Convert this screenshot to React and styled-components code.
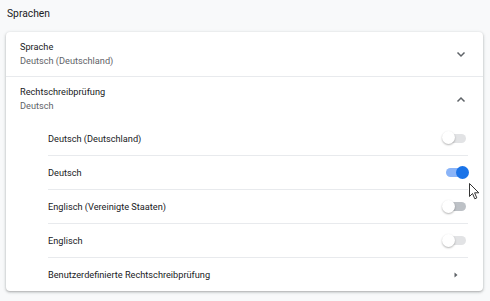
import React from "react";
import styled, { createGlobalStyle } from "styled-components";

const Global = createGlobalStyle`
  html, body { margin: 0; padding: 0; background: #f8f9fa; }
  body { font-family: Roboto, "Liberation Sans", sans-serif; color: #202124; -webkit-font-smoothing: antialiased; }
`;

const Page = styled.div`
  width: 490px;
  height: 301px;
  box-sizing: border-box;
  padding: 7px 7px 0 6px;
  position: relative;
  overflow: hidden;
`;

const Title = styled.div`
  font-size: 10.3px;
  line-height: 13px;
  color: #202124;
  padding-left: 1px;
  margin-bottom: 12px;
`;

const Card = styled.div`
  background: #fff;
  border-radius: 4px;
  box-shadow: 0 1px 2px rgba(60, 64, 67, 0.3), 0 1px 3px 1px rgba(60, 64, 67, 0.12);
`;

const Section = styled.div`
  display: flex;
  align-items: center;
  justify-content: space-between;
  padding: 0 16px 0 14px;
  height: ${(p) => p.$h}px;
  border-top: ${(p) => (p.$divider ? "1px solid #e8eaed" : "none")};
  box-sizing: border-box;
`;

const Labels = styled.div`
  display: flex;
  flex-direction: column;
  gap: 1px;
  margin-top: -2px;
`;

const Primary = styled.div`
  font-size: 9.2px;
  line-height: 13px;
  color: #202124;
`;

const Secondary = styled.div`
  font-size: 9.2px;
  line-height: 13px;
  color: #5f6368;
`;

const List = styled.div`
  padding: 0 15px 0 42px;
`;

const Row = styled.div`
  display: flex;
  align-items: center;
  justify-content: space-between;
  height: 34px;
  border-top: ${(p) => (p.$divider ? "1px solid #e8eaed" : "none")};
  box-sizing: border-box;
`;

const Track = styled.div`
  position: relative;
  width: 20px;
  height: 9px;
  border-radius: 5px;
  margin-right: 2px;
  background: ${(p) => (p.$on ? "#8ab4f8" : p.$hover ? "#bdc1c6" : "#e2e3e5")};
`;

const Knob = styled.div`
  position: absolute;
  top: -2.5px;
  left: ${(p) => (p.$on ? "10px" : "-4px")};
  width: 13px;
  height: 13px;
  border-radius: 50%;
  background: ${(p) => (p.$on ? "#1a73e8" : "#fff")};
  box-shadow: ${(p) => (p.$on ? "none" : "0 1px 2px rgba(0,0,0,0.3)")};
`;

const IconBox = styled.div`
  display: flex;
  align-items: center;
  justify-content: center;
  width: 12px;
  height: 12px;
  margin-right: ${(p) => p.$mr || 0}px;
  color: #5f6368;
`;

const Cursor = styled.svg`
  position: absolute;
  left: 469px;
  top: 183px;
`;

function Toggle({ on, hover }) {
  return (
    <Track $on={on} $hover={hover}>
      <Knob $on={on} />
    </Track>
  );
}

const Chevron = ({ up }) => (
  <IconBox>
    <svg width="10" height="7" viewBox="0 0 10 7">
      <path
        d={up ? "M1.5 5.5 L5 2 L8.5 5.5" : "M1.5 1.5 L5 5 L8.5 1.5"}
        fill="none"
        stroke="#5f6368"
        strokeWidth="1.5"
      />
    </svg>
  </IconBox>
);

const rows = [
  { label: "Deutsch (Deutschland)", on: false },
  { label: "Deutsch", on: true },
  { label: "Englisch (Vereinigte Staaten)", on: false, hover: true },
  { label: "Englisch", on: false },
];

export default function App() {
  return (
    <>
      <Global />
      <Page>
        <Title>Sprachen</Title>
        <Card>
          <Section $h={44}>
            <Labels>
              <Primary>Sprache</Primary>
              <Secondary>Deutsch (Deutschland)</Secondary>
            </Labels>
            <Chevron />
          </Section>
          <Section $h={45} $divider>
            <Labels>
              <Primary>Rechtschreibprüfung</Primary>
              <Secondary>Deutsch</Secondary>
            </Labels>
            <Chevron up />
          </Section>
          <List>
            {rows.map((r, i) => (
              <Row key={r.label} $divider={i > 0}>
                <Primary>{r.label}</Primary>
                <Toggle on={r.on} hover={r.hover} />
              </Row>
            ))}
            <Row $divider>
              <Primary>Benutzerdefinierte Rechtschreibprüfung</Primary>
              <IconBox $mr={6}>
                <svg width="6" height="8" viewBox="0 0 6 8">
                  <path d="M1.5 1.5 L4.5 4 L1.5 6.5 Z" fill="#5f6368" />
                </svg>
              </IconBox>
            </Row>
          </List>
        </Card>
        <Cursor width="12" height="17" viewBox="0 0 12 17">
          <path d="M0.5 0.5 L0.5 13.5 L3.5 10.5 L5.8 15.8 L7.8 14.9 L5.6 9.8 L9.8 9.8 Z" fill="#fff" stroke="#333" strokeWidth="1" strokeLinejoin="round" />
        </Cursor>
      </Page>
    </>
  );
}
